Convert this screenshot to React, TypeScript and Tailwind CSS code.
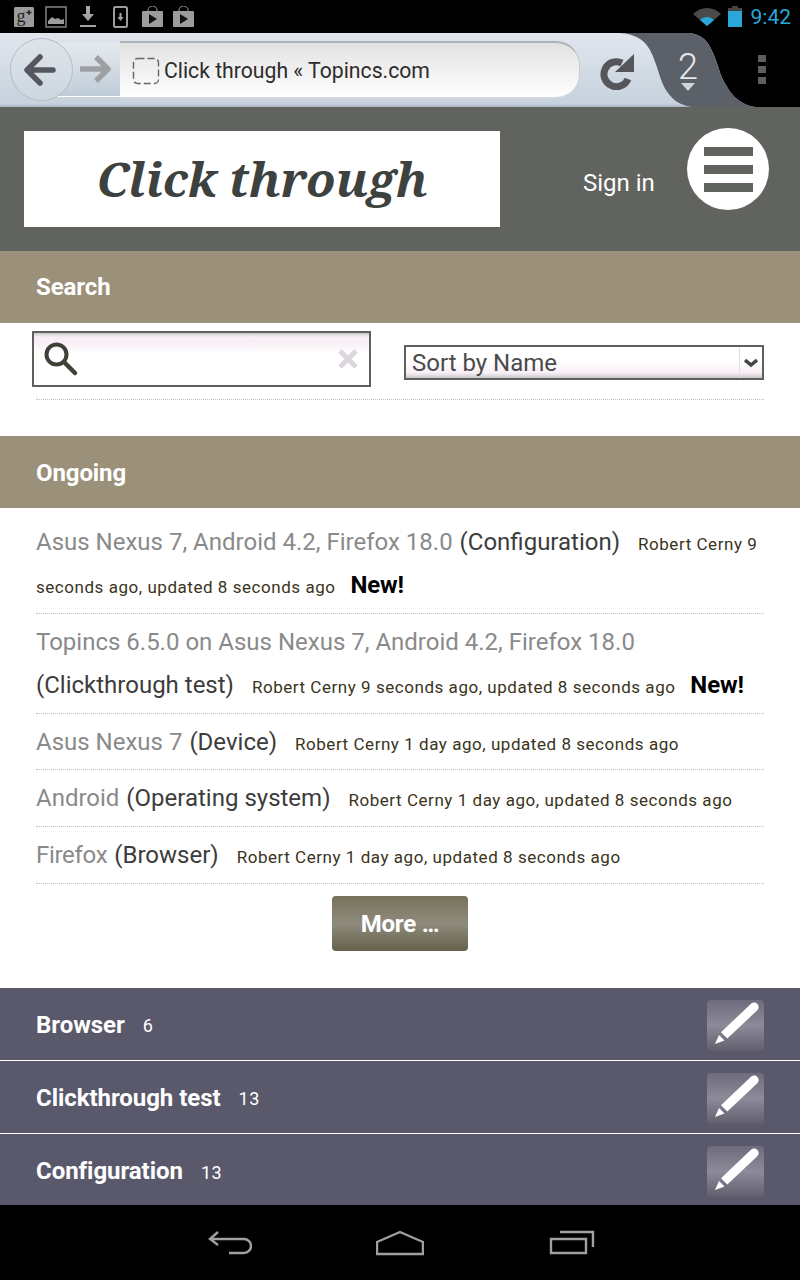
import React from "react";

const roboto = "font-['Roboto',sans-serif]";

function Bag() {
  return (
    <svg width="21" height="22" viewBox="0 0 21 22">
      <path d="M6 6V4a4.500 4 0 0 1 9 0v2" fill="none" stroke="#9c9c9c" strokeWidth="1" />
      <rect y="5" width="21" height="16" rx="1" fill="#9c9c9c" />
      <path d="M7 8l8 5-8 5z" fill="#111" />
    </svg>
  );
}

function StatusIcons() {
  return (
    <div className="flex items-center pl-[14px]">
      <svg width="20" height="20" viewBox="0 0 20 20">
        <rect width="20" height="20" rx="1.500" fill="#9c9c9c" />
        <text x="2.500" y="15" fontSize="18" fontFamily="'Liberation Serif',serif" fill="#222">g</text>
        <path d="M12.500 5.500h5M15 3v5" stroke="#222" strokeWidth="1.400" />
      </svg>
      <svg width="22" height="22" viewBox="0 0 22 22" className="ml-[11px]">
        <rect x="1" y="1" width="20" height="20" fill="none" stroke="#8a8a8a" strokeWidth="1.400" />
        <path d="M3 18v-3l4-4 3 2 3-1 3 2 3-1v5z" fill="#9c9c9c" />
      </svg>
      <svg width="16" height="22" viewBox="0 0 16 22" className="ml-[13px]">
        <path d="M6 0h4v8h4l-6 7-6-7h4z" fill="#a5a5a5" />
        <rect x="0" y="19" width="16" height="2" fill="#a5a5a5" />
      </svg>
      <svg width="15" height="22" viewBox="0 0 15 22" className="ml-[17px]">
        <rect x="1" y="1" width="13" height="20" rx="1.500" fill="none" stroke="#9c9c9c" strokeWidth="2" />
        <path d="M6.500 7h2v4h2l-3 4-3-4h2z" fill="#a5a5a5" />
      </svg>
      <div className="ml-[14px]"><Bag /></div>
      <div className="ml-[10px]"><Bag /></div>
    </div>
  );
}

function StatusBar() {
  return (
    <div className="h-[33px] shrink-0 bg-black flex items-center justify-between">
      <StatusIcons />
      <div className="flex items-center pr-[9px]">
        <svg width="28" height="18" viewBox="0 0 28 18">
          <path d="M0 6C8-2 20-2 28 6L14 18z" fill="#4a4a4a" />
          <path d="M7 12c4.500-4 9.500-4 14 0L14 18z" fill="#2ba6d8" />
        </svg>
        <svg width="14" height="21" viewBox="0 0 14 21" className="ml-[7px]">
          <rect x="4" y="0" width="6" height="2" fill="#444" />
          <rect x="0" y="2" width="14" height="3" fill="#444" />
          <rect x="0" y="5" width="14" height="16" fill="#2ba6d8" />
        </svg>
        <span className={`${roboto} ml-[9px] mt-[2px] text-[21px] leading-none text-[#2ba6d8]`}>9:42</span>
      </div>
    </div>
  );
}

function Toolbar() {
  return (
    <div className="relative h-[74px] shrink-0 bg-[linear-gradient(to_bottom,#e1e6ed,#c6d2dd_96%,#a9b3bc)] overflow-hidden">
      <div className="flex items-start pl-[120px] pt-[8px]">
        <div className={`${roboto} h-[58px] w-[460px] pt-[2px] rounded-r-[24px] border-t-[2px] border-b-[2px] border-t-[#aeb3b8] border-b-[#d0d6dc] border-r border-r-[#c4ccd3] bg-gradient-to-b from-[#e2e2e2] to-white flex items-center pl-[12px] text-[21.2px] text-[#2c2c2c]`}>
          <svg width="28" height="28" viewBox="0 0 28 28" className="mr-[4px] shrink-0">
            <rect x="1.500" y="1.500" width="25" height="25" rx="4" fill="none" stroke="#666" strokeWidth="1.400" strokeDasharray="7 3" />
          </svg>
          Click through « Topincs.com
        </div>
        <svg width="38" height="38" viewBox="0 0 38 38" className="ml-[19px] mt-[11px]">
          <path d="M29 27A12.500 12.500 0 1 1 23 11" fill="none" stroke="#55565b" strokeWidth="7" />
          <path d="M35 2v18H16z" fill="#55565b" />
        </svg>
      </div>
      <div className="absolute left-[52px] top-[10px] w-[68px] h-[54px] border-b border-white bg-gradient-to-b from-[#e6eaef] to-[#bfccd8]" />
      <div className="absolute left-[10px] top-[5px] w-[63px] h-[63px] rounded-full border border-[#b4bcc4] bg-gradient-to-b from-[#dfe4ea] to-[#cdd7e0] flex items-center justify-center">
        <svg width="36" height="36" viewBox="0 0 36 36" className="-ml-[4px]">
          <path d="M31 18H6M18 5L5 18l13 13" fill="none" stroke="#55565f" strokeWidth="5.500" strokeLinecap="round" strokeLinejoin="round" />
        </svg>
      </div>
      <svg width="34" height="34" viewBox="0 0 34 34" className="absolute left-[78px] top-[19px]">
        <path d="M2 17h26M18 5l12 12-12 12" fill="none" stroke="#9d9fa2" strokeWidth="5.500" strokeLinejoin="round" />
      </svg>
      <svg width="180" height="74" viewBox="0 0 180 74" className="absolute left-[620px] top-0">
        <path d="M70 0C82 2 88 8 92 18 98 30 100 44 106 52 112 64 122 72 135 74H180V0z" fill="#000" />
        <path d="M0 0C14 1 24 6 30 17 38 32 40 50 48 60 54 68 60 72 72 74H135C122 72 112 64 106 52 100 44 98 30 92 18 88 8 82 2 70 0z" fill="#5c6068" />
      </svg>
      <span className={`${roboto} absolute left-[678px] top-[16px] text-[36px] leading-none font-light text-[#e4e8ec]`}>2</span>
      <svg width="14" height="8" viewBox="0 0 14 8" className="absolute left-[681px] top-[50px]"><path d="M0 0h14L7 8z" fill="#cfd4d9" /></svg>
      <div className="absolute left-[758px] top-[22px] flex flex-col gap-[4px]">
        <div className="w-[8px] h-[7px] bg-[#5e5e5e]" />
        <div className="w-[8px] h-[7px] bg-[#5e5e5e]" />
        <div className="w-[8px] h-[7px] bg-[#5e5e5e]" />
      </div>
    </div>
  );
}

function Header() {
  return (
    <div className="h-[144px] shrink-0 bg-[#61635f] flex items-start pl-[24px] pr-[31px]">
      <div className="mt-[24px] w-[476px] h-[96px] bg-white flex items-center justify-center font-['Noto_Serif','DejaVu_Serif',serif] italic font-bold text-[48px] text-[#3d423e]">
        Click through
      </div>
      <span className={`${roboto} ml-[83px] mt-[58px] text-[24px] leading-[36px] text-white`}>Sign in</span>
      <div className="ml-auto mt-[21px] w-[82px] h-[82px] rounded-full bg-white flex flex-col items-center justify-center gap-[9px] pt-[1px]">
        <div className="w-[49px] h-[9px] bg-[#61635f]" />
        <div className="w-[49px] h-[9px] bg-[#61635f]" />
        <div className="w-[49px] h-[9px] bg-[#61635f]" />
      </div>
    </div>
  );
}

function Band({ title, low }: { title: string; low?: boolean }) {
  return (
    <div className={`${roboto} h-[72px] bg-[#9b9079] flex items-center pl-[36px] text-[24px] font-bold tracking-[-0.1px] text-white ${low ? "pt-[2px]" : ""}`}>{title}</div>
  );
}

function Row({ link, kind, meta, isNew, first, tight, short }: { link: string; kind: string; meta: string; isNew?: boolean; first?: boolean; tight?: boolean; short?: boolean }) {
  return (
    <div className={`border-b border-dotted border-[#bdbdbd] text-[24px] leading-[43px] ${short ? "pb-[5px]" : "pb-[6px]"} ${first ? "pt-[13px]" : "pt-[7px]"}`}>
      <span className={`leading-none text-[#8a8a8a] mr-[1px] ${tight ? "tracking-[-0.3px]" : ""}`}>{link}</span>{" "}
      <span className="leading-none text-[#3c3c3c] mr-[12px]">({kind})</span>{" "}
      <span className="text-[17px] leading-none tracking-[0.54px] text-[#3a3320]">{meta}</span>
      {isNew && <span className="ml-[9px] text-[24px] leading-none font-bold tracking-[-0.1px] text-black">{" "}New!</span>}
    </div>
  );
}

function TagRow({ name, count, divider }: { name: string; count: string; divider?: boolean }) {
  return (
    <div className={`h-[73px] bg-[#5a596c] flex items-center pl-[36px] pr-[36px] pt-[1px] ${divider ? "border-b border-white" : ""}`}>
      <span className="text-[24px] font-bold tracking-[-0.05px] text-white">{name}</span>
      <span className="ml-[18px] mt-[2px] text-[18px] tracking-[0.6px] text-white">{count}</span>
      <div className="ml-auto self-start mt-[11px] w-[57px] h-[51px] rounded-[4px] bg-gradient-to-b from-[#6d6c7c] via-[#8d8b9a] to-[#605f6e]">
        <svg width="57" height="51" viewBox="0 0 57 51">
          <path d="M44 3.800a4.500 4.500 0 0 1 6.300 6.500L20.300 38.500l-6.300-6.300z" fill="#fff" />
          <path d="M12 35l5.500 5.500L8 44z" fill="#fff" />
        </svg>
      </div>
    </div>
  );
}

export default function App() {
  return (
    <div className="h-[1280px] w-[800px] flex flex-col overflow-hidden bg-white">
      <StatusBar />
      <Toolbar />
      <Header />
      <div className={`${roboto} flex-1 min-h-0 overflow-hidden`}>
        <Band title="Search" />
        <div className="h-[113px] px-[36px]">
          <div className="flex items-start border-b border-dotted border-[#bdbdbd] h-[77px] pt-[8px]">
            <div className="-ml-[4px] w-[339px] h-[56px] border-2 border-[#5f605b] bg-[linear-gradient(to_bottom,#c8c8c8_0px,#f8eef6_4px,#faf2f8_12px,#ffffff_20px)] flex items-center justify-between pl-[9px] pr-[10px]">
              <svg width="36" height="36" viewBox="0 0 36 36">
                <circle cx="13.500" cy="13.500" r="10" fill="none" stroke="#3f4036" strokeWidth="4" />
                <path d="M21 21l11 11" stroke="#3f4036" strokeWidth="4.500" strokeLinecap="round" />
              </svg>
              <svg width="22" height="22" viewBox="0 0 22 22">
                <path d="M3 3l16 16M19 3L3 19" stroke="#dcd6dc" strokeWidth="5" />
              </svg>
            </div>
            <div className="ml-[33px] mt-[14px] w-[360px] h-[35px] border-2 border-[#5f605b] bg-[linear-gradient(to_bottom,#ffffff_0px,#ffffff_14px,#f8eef6_26px,#c8c8c8_31px)] flex items-center justify-between pl-[6px] text-[24px] leading-none text-[#4a4a4a]">
              <span>Sort by Name</span>
              <div className="h-full w-[23px] border-l border-[#e0e0e0] flex items-center justify-center">
                <svg width="14" height="10" viewBox="0 0 14 10"><path d="M1 2l6 5 6-5" fill="none" stroke="#444" strokeWidth="3.500" /></svg>
              </div>
            </div>
          </div>
        </div>
        <Band title="Ongoing" low />
        <div className="h-[480px] px-[36px]">
          <Row first link="Asus Nexus 7, Android 4.2, Firefox 18.0" kind="Configuration" meta="Robert Cerny 9 seconds ago, updated 8 seconds ago" isNew />
          <Row link="Topincs 6.5.0 on Asus Nexus 7, Android 4.2, Firefox 18.0" kind="Clickthrough test" meta="Robert Cerny 9 seconds ago, updated 8 seconds ago" isNew />
          <Row short link="Asus Nexus 7" kind="Device" meta="Robert Cerny 1 day ago, updated 8 seconds ago" />
          <Row link="Android" kind="Operating system" meta="Robert Cerny 1 day ago, updated 8 seconds ago" />
          <Row tight link="Firefox" kind="Browser" meta="Robert Cerny 1 day ago, updated 8 seconds ago" />
          <div className="flex justify-center pt-[12px]">
            <div className="w-[136px] h-[55px] rounded-[4px] bg-gradient-to-b from-[#77725a] via-[#8f8b7c] to-[#65614c] flex items-center justify-center text-[24px] font-bold tracking-[-0.2px] text-white">More …</div>
          </div>
        </div>
        <TagRow name="Browser" count="6" divider />
        <TagRow name="Clickthrough test" count="13" divider />
        <TagRow name="Configuration" count="13" />
      </div>
      <div className="h-[75px] shrink-0 bg-black flex items-center">
        <svg width="44" height="26" viewBox="0 0 44 26" className="ml-[208px]">
          <path d="M10 2L2 9l8 6M2 9h34a6.500 6.500 0 0 1 0 14H21" fill="none" stroke="#a0a0a0" strokeWidth="2.400" />
        </svg>
        <svg width="48" height="26" viewBox="0 0 48 26" className="ml-[124px]">
          <path d="M24 2L47 12v12H1V12z" fill="none" stroke="#a0a0a0" strokeWidth="2.400" />
        </svg>
        <svg width="46" height="26" viewBox="0 0 46 26" className="ml-[125px]">
          <path d="M11 2h33v15M2 9h35v14H2z" fill="none" stroke="#a0a0a0" strokeWidth="2.400" />
        </svg>
      </div>
    </div>
  );
}
